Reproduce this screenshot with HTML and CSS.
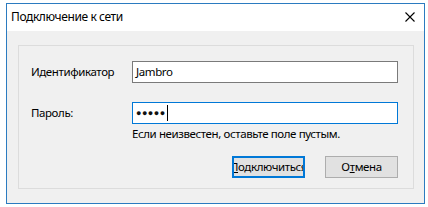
FILE: index.html
```html
<!DOCTYPE html>
<html>
<head>
<meta charset="utf-8">
<link rel="stylesheet" href="styles.css">
</head>
<body>
<div class="window">
  <div class="titlebar">
    <span class="title">Подключение к сети</span>
    <svg class="close" width="10" height="10" viewBox="0 0 10 10"><path d="M0.5 0.5 L9.5 9.5 M9.5 0.5 L0.5 9.5" stroke="#000" stroke-width="1.1" fill="none"/></svg>
  </div>
  <div class="client">
    <div class="group">
      <div class="form">
        <label class="label">Идентификатор</label>
        <div class="input"><span class="value">Jambro</span></div>
        <label class="label">Пароль:</label>
        <div class="input focused"><span class="dots">●●●●●</span><span class="caret"></span></div>
        <div></div>
        <div class="hint">Если неизвестен, оставьте поле пустым.</div>
      </div>
      <div class="buttons">
        <div class="btn default"><span class="btn-text"><u>П</u>одключиться</span></div>
        <div class="btn"><span class="btn-text">О<u>т</u>мена</span></div>
      </div>
    </div>
  </div>
</div>
</body>
</html>
```
FILE: styles.css
```css
html, body {
  margin: 0;
  padding: 0;
  background: #ffffff;
}
body {
  padding: 3px 4px 4px 6px;
  font-family: "Noto Sans", sans-serif;
  font-size: 11.5px;
  letter-spacing: -0.4px;
  color: #000;
}
.window {
  width: 417px;
  height: 199px;
  border: 1px solid #2b7bc0;
  background: #f0f0f0;
  display: flex;
  flex-direction: column;
}
.titlebar {
  height: 27px;
  background: #ffffff;
  display: flex;
  align-items: center;
  justify-content: space-between;
  padding: 0 9px 0 4px;
  box-sizing: border-box;
}
.title {
  font-size: 12px;
  line-height: 16px;
  margin-top: -2px;
}
.close {
  display: block;
  margin-top: -2px;
}
.client {
  flex: 1;
  padding: 14px 10px 14px 11px;
  display: flex;
}
.group {
  flex: 1;
  border: 1px solid #dcdcdc;
  display: flex;
  flex-direction: column;
  padding: 15px 15px 0 12px;
}
.form {
  display: grid;
  grid-template-columns: 101px 266px;
  grid-template-rows: 22px 22px auto;
  row-gap: 19px;
  align-items: center;
}
.form .hint {
  margin-top: -19px;
  line-height: 16px;
}
.label {
  line-height: 16px;
}
.input {
  height: 22px;
  box-sizing: border-box;
  border: 1px solid #7a7a7a;
  background: #fff;
  display: flex;
  align-items: center;
  padding-left: 3px;
}
.input.focused {
  border-color: #0078d7;
}
.value {
  line-height: 16px;
}
.dots {
  font-size: 9px;
  letter-spacing: 0.5px;
  line-height: 16px;
  color: #111;
}
.caret {
  width: 1px;
  height: 16px;
  background: #000;
  margin-left: 1px;
}
.buttons {
  display: flex;
  justify-content: flex-end;
  gap: 20px;
  margin-top: 13px;
}
.btn {
  width: 73px;
  height: 22px;
  box-sizing: border-box;
  border: 1px solid #adadad;
  background: #e1e1e1;
  display: flex;
  align-items: center;
  justify-content: center;
  overflow: hidden;
}
.btn.default {
  border: 2px solid #0078d7;
}
.btn-text {
  white-space: nowrap;
  line-height: 16px;
}
```
